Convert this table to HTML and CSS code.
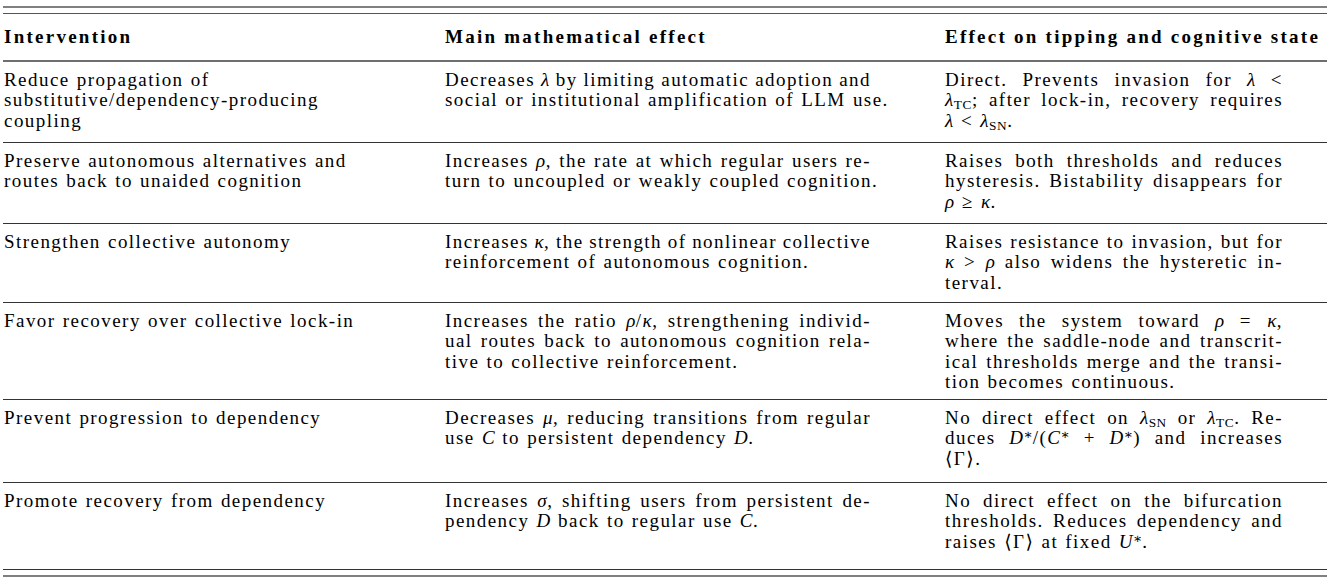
FILE: index.html
```html
<!DOCTYPE html>
<html lang="en">
<head>
<meta charset="utf-8">
<title>Interventions table</title>
<link rel="stylesheet" href="styles.css">
</head>
<body>
<div class="tbl">
  <div class="rule outer"></div>
  <div class="rule inner"></div>
  <div class="grid">
    <div class="cell head c1">Intervention</div>
    <div class="cell head c2">Main mathematical effect</div>
    <div class="cell head c3">Effect on tipping and cognitive state</div>

    <div class="cell c1"><span class="l">Reduce propagation of</span><span class="l">substitutive/dependency-producing</span><span class="l">coupling</span></div>
    <div class="cell c2"><div class="txt"><span class="l j">Decreases <i class="m">λ</i> by limiting automatic adoption and</span><span class="l">social or institutional amplification of LLM use.</span></div></div>
    <div class="cell c3"><div class="txt"><span class="l j">Direct. Prevents invasion for <i class="m">λ</i> &lt;</span><span class="l j"><i class="m">λ</i><sub class="s">TC</sub>; after lock-in, recovery requires</span><span class="l"><i class="m">λ</i> &lt; <i class="m">λ</i><sub class="s">SN</sub>.</span></div></div>

    <div class="cell c1"><span class="l">Preserve autonomous alternatives and</span><span class="l">routes back to unaided cognition</span></div>
    <div class="cell c2"><div class="txt"><span class="l j">Increases <i class="m">ρ</i>, the rate at which regular users re-</span><span class="l">turn to uncoupled or weakly coupled cognition.</span></div></div>
    <div class="cell c3"><div class="txt"><span class="l j">Raises both thresholds and reduces</span><span class="l j">hysteresis. Bistability disappears for</span><span class="l"><i class="m">ρ</i> ≥ <i class="m">κ</i>.</span></div></div>

    <div class="cell c1"><span class="l">Strengthen collective autonomy</span></div>
    <div class="cell c2"><div class="txt"><span class="l j">Increases <i class="m">κ</i>, the strength of nonlinear collective</span><span class="l">reinforcement of autonomous cognition.</span></div></div>
    <div class="cell c3"><div class="txt"><span class="l j">Raises resistance to invasion, but for</span><span class="l j"><i class="m">κ</i> &gt; <i class="m">ρ</i> also widens the hysteretic in-</span><span class="l">terval.</span></div></div>

    <div class="cell c1"><span class="l">Favor recovery over collective lock-in</span></div>
    <div class="cell c2"><div class="txt"><span class="l j">Increases the ratio <i class="m">ρ</i>/<i class="m">κ</i>, strengthening individ-</span><span class="l j">ual routes back to autonomous cognition rela-</span><span class="l">tive to collective reinforcement.</span></div></div>
    <div class="cell c3"><div class="txt"><span class="l j">Moves the system toward <i class="m">ρ</i> = <i class="m">κ</i>,</span><span class="l j">where the saddle-node and transcrit-</span><span class="l j">ical thresholds merge and the transi-</span><span class="l">tion becomes continuous.</span></div></div>

    <div class="cell c1"><span class="l">Prevent progression to dependency</span></div>
    <div class="cell c2"><div class="txt"><span class="l j">Decreases <i class="m">μ</i>, reducing transitions from regular</span><span class="l">use <i class="m">C</i> to persistent dependency <i class="m">D</i>.</span></div></div>
    <div class="cell c3"><div class="txt"><span class="l j">No direct effect on <i class="m">λ</i><sub class="s">SN</sub> or <i class="m">λ</i><sub class="s">TC</sub>. Re-</span><span class="l j">duces <i class="m">D</i><sup class="st">∗</sup>/(<i class="m">C</i><sup class="st">∗</sup> + <i class="m">D</i><sup class="st">∗</sup>) and increases</span><span class="l">⟨Γ⟩.</span></div></div>

    <div class="cell c1"><span class="l">Promote recovery from dependency</span></div>
    <div class="cell c2"><div class="txt"><span class="l j">Increases <i class="m">σ</i>, shifting users from persistent de-</span><span class="l">pendency <i class="m">D</i> back to regular use <i class="m">C</i>.</span></div></div>
    <div class="cell c3"><div class="txt"><span class="l j">No direct effect on the bifurcation</span><span class="l j">thresholds. Reduces dependency and</span><span class="l">raises ⟨Γ⟩ at fixed <i class="m">U</i><sup class="st">∗</sup>.</span></div></div>
  </div>
  <div class="rule outer"></div>
</div>
</body>
</html>
```

FILE: styles.css
```css
html, body {
  margin: 0;
  padding: 0;
  background: #ffffff;
}

body {
  font-family: "Liberation Serif", "DejaVu Serif", serif;
  font-size: 19px;
  color: #000000;
}

.tbl {
  width: 1324px;
  margin-left: 3px;
  padding-top: 6px;
}

.rule {
  width: 100%;
}

.rule.outer {
  height: 2px;
  background: #808080;
}

.rule.inner {
  height: 1px;
  background: #555555;
  margin-top: 5px;
}

.grid {
  display: grid;
  grid-template-columns: 441px 500px 383px;
  grid-template-rows: 48px 81px 81px 79px 97px 83px 87px;
  margin-bottom: 5px;
}

.cell {
  box-sizing: border-box;
  border-bottom: 1px solid #333333;
  padding-left: 1px;
  padding-top: 8px;
  line-height: 20.3px;
  letter-spacing: 1.45px;
  word-spacing: 1px;
}

.cell.head {
  border-bottom: 2px solid #6e6e6e;
  padding-top: 13px;
  font-weight: bold;
  letter-spacing: 2.25px;
  word-spacing: 0;
  white-space: nowrap;
}

.c2 .txt {
  width: 426px;
}

.c3 .txt {
  width: 338px;
}

.l {
  display: block;
  white-space: nowrap;
}

.l.j {
  white-space: normal;
  word-spacing: -6px;
  text-align: justify;
  text-align-last: justify;
}

.m {
  font-style: italic;
  letter-spacing: 0.5px;
}

.s {
  font-size: 0.7em;
  vertical-align: -0.2em;
  line-height: 0;
  letter-spacing: 0.6px;
}

.st {
  font-size: 0.72em;
  vertical-align: 0.38em;
  line-height: 0;
  letter-spacing: 0;
}
```
